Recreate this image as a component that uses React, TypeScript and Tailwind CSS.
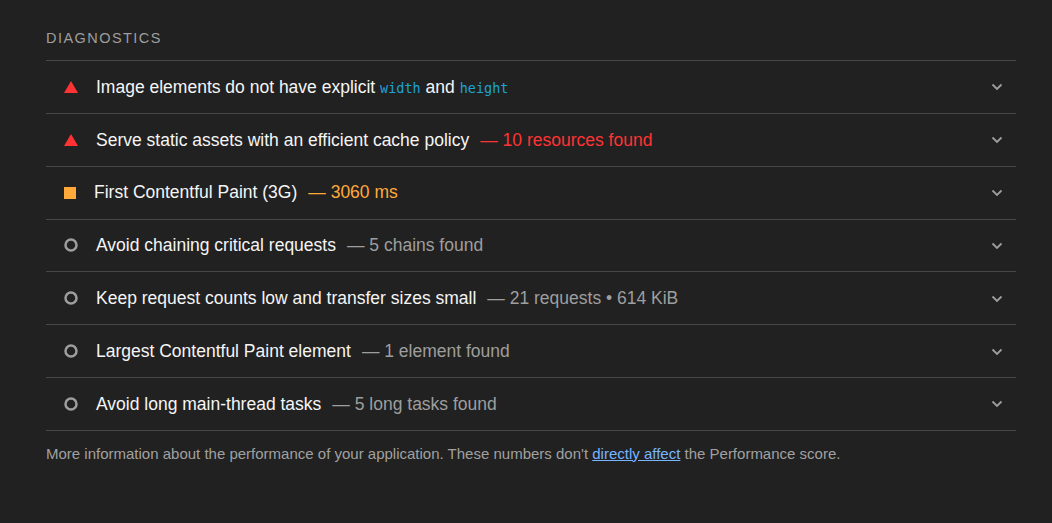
import React from "react";

type Kind = "fail" | "average" | "info";

const codeCls = "font-['DejaVu_Sans_Mono',monospace] text-[13.5px] text-[#1ea2d4]";

const audits: { kind: Kind; title: React.ReactNode; detail?: string }[] = [
  {
    kind: "fail",
    title: (
      <>
        Image elements do not have explicit <code className={codeCls}>width</code> and <code className={codeCls}>height</code>
      </>
    ),
  },
  { kind: "fail", title: "Serve static assets with an efficient cache policy", detail: "10 resources found" },
  { kind: "average", title: "First Contentful Paint (3G)", detail: "3060 ms" },
  { kind: "info", title: "Avoid chaining critical requests", detail: "5 chains found" },
  { kind: "info", title: "Keep request counts low and transfer sizes small", detail: "21 requests • 614 KiB" },
  { kind: "info", title: "Largest Contentful Paint element", detail: "1 element found" },
  { kind: "info", title: "Avoid long main-thread tasks", detail: "5 long tasks found" },
];

function Icon({ kind }: { kind: Kind }) {
  if (kind === "fail")
    return (
      <svg width="14" height="12" viewBox="0 0 14 12" className="ml-[18px] mr-[18px] shrink-0">
        <polygon points="7,0 14,12 0,12" fill="#ff3333" />
      </svg>
    );
  if (kind === "average")
    return <div className="ml-[18px] mr-[18px] h-3 w-3 shrink-0 bg-[#ffa93b]" />;
  return (
    <svg width="14" height="14" viewBox="0 0 14 14" className="ml-[18px] mr-[18px] shrink-0">
      <circle cx="7" cy="7" r="5.5" fill="none" stroke="#9e9e9e" strokeWidth="2.5" />
    </svg>
  );
}

const detailColor: Record<Kind, string> = {
  fail: "text-[#ff3333]",
  average: "text-[#ffa93b]",
  info: "text-[#9e9e9e]",
};

export default function App() {
  return (
    <div className="min-h-[523px] w-full bg-[#212121] pl-[46px] pr-[36px] pt-[30px] font-['Liberation_Sans',Arial,sans-serif]">
      <div className="mb-[13px] text-[14.5px] tracking-[0.1em] leading-[17px] text-[#9e9e9e]">DIAGNOSTICS</div>
      <div className="border-t border-[#474747]">
        {audits.map((a, i) => (
          <div key={i} className="flex h-[52.85px] items-center border-b border-[#474747]">
            <Icon kind={a.kind} />
            <div className="flex-1 text-[17.5px] text-[#f5f5f5]">
              {a.title}
              {a.detail && <span className={`ml-[11px] ${detailColor[a.kind]}`}>— {a.detail}</span>}
            </div>
            <svg width="12" height="8" viewBox="0 0 12 8" className="mr-[13px] mt-[1px] shrink-0">
              <polyline points="1.5,1.5 6,6 10.5,1.5" fill="none" stroke="#9e9e9e" strokeWidth="1.8" />
            </svg>
          </div>
        ))}
      </div>
      <p className="mt-[12px] text-[15px] text-[#a0a0a0]">
        More information about the performance of your application. These numbers don't{" "}
        <a href="#" className="text-[#78b4ff] underline">directly affect</a> the Performance score.
      </p>
    </div>
  );
}
